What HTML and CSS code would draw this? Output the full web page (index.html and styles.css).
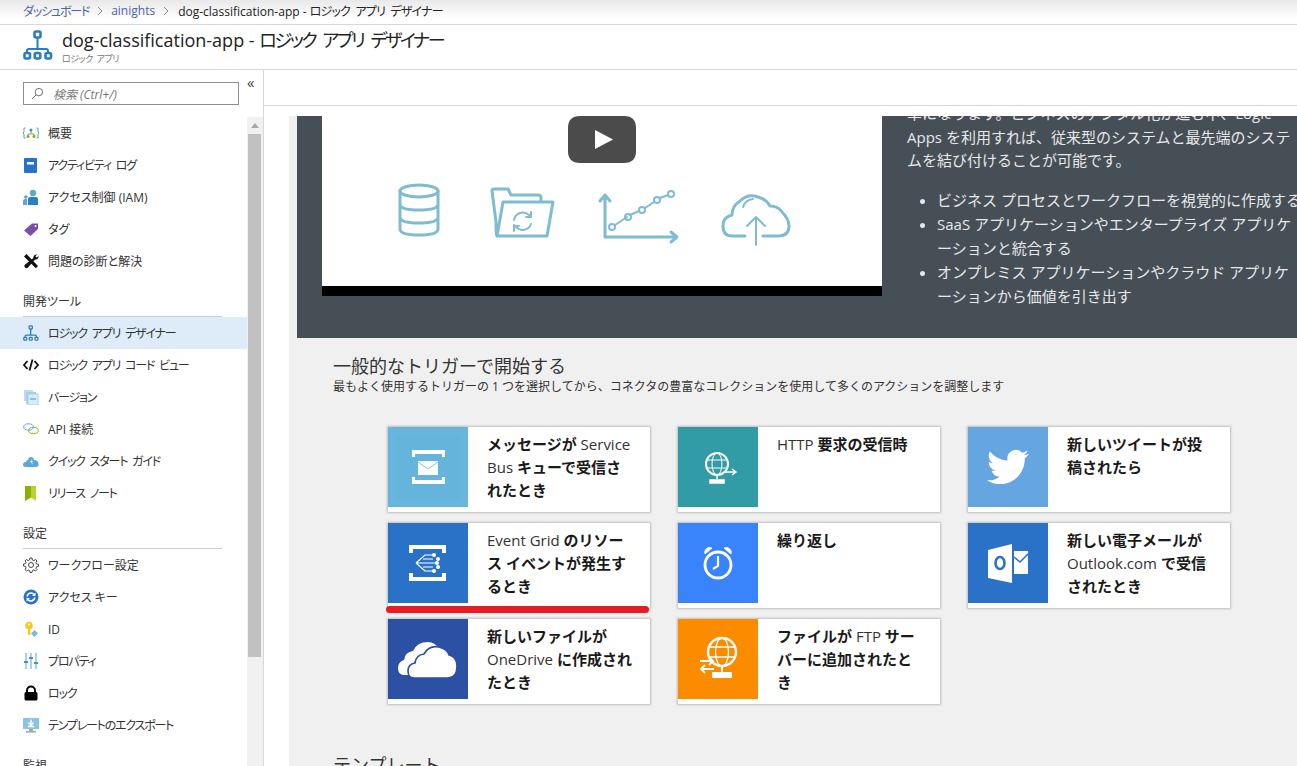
FILE: index.html
```html
<!DOCTYPE html>
<html lang="ja">
<head>
<meta charset="utf-8">
<title>dog-classification-app - ロジック アプリ デザイナー</title>
<link rel="stylesheet" href="styles.css">
</head>
<body>
<div class="page">
  <nav class="crumbs">
    <a class="crumb-link tight">ダッシュボード</a>
    <svg class="chev" viewBox="0 0 6 10"><path d="M1 1l4 4-4 4" fill="none" stroke="#8a8a8a"/></svg>
    <a class="crumb-link">ainights</a>
    <svg class="chev" viewBox="0 0 6 10"><path d="M1 1l4 4-4 4" fill="none" stroke="#8a8a8a"/></svg>
    <span class="crumb-current">dog-classification-app - <span class="tight-half">ロジック アプリ デザイナー</span></span>
  </nav>
  <header class="head">
    <svg class="head-icon" viewBox="0 0 30 30" fill="none" stroke="#2b7cbf" stroke-width="2.6">
      <rect x="11.5" y="1.5" width="6" height="6" rx="1.5"/>
      <path d="M14.500 7.500V19M4 24v-3q0-2 2-2h17q2 0 2 2v3" stroke-width="2"/>
      <rect x="1.500" y="23" width="5.500" height="5.500" rx="1.500"/>
      <rect x="11.800" y="23" width="5.500" height="5.500" rx="1.500"/>
      <rect x="22.500" y="23" width="5.500" height="5.500" rx="1.500"/>
    </svg>
    <div>
      <h1 class="head-title">dog-classification-app - <span class="tight-title">ロジック アプリ デザイナー</span></h1>
      <div class="head-sub">ロジック アプリ</div>
    </div>
  </header>
  <div class="body">
    <aside class="side">
      <div class="side-top">
        <div class="search">
          <svg class="search-icon" viewBox="0 0 14 14" fill="none" stroke="#666"><circle cx="8.500" cy="5.500" r="4"/><path d="M5.500 8.500L1 13"/></svg>
          <span>検索 (Ctrl+/)</span>
        </div>
        <span class="collapse">«</span>
      </div>
      <div class="side-body">
        <ul class="menu">
          <li class="item"><svg class="ico" viewBox="0 0 16 16"><path d="M2.500 3H1v4l-1 1 1 1v4h1.500M13.500 3H15v4l1 1-1 1v4h-1.500" fill="none" stroke="#5ba3d0"/><circle cx="8" cy="5" r="1.500" fill="#3b8fc9"/><path d="M8 6v2.500M5 11V9h6v2" fill="none" stroke="#777" stroke-width=".8"/><circle cx="5" cy="11.500" r="1.500" fill="#7fba00"/><circle cx="11" cy="11.500" r="1.500" fill="#7fba00"/></svg>概要</li>
          <li class="item tight"><svg class="ico" viewBox="0 0 16 16"><rect x="1" y="1" width="13" height="15" rx="1" fill="#2a71c8"/><rect x="4" y="5" width="7" height="2.500" fill="#fff"/></svg>アクティビティ ログ</li>
          <li class="item"><svg class="ico" viewBox="0 0 16 16"><circle cx="10" cy="4" r="3.200" fill="#59a8d8"/><path d="M5 16V10q0-2 2-2h6q2 0 2 2v6z" fill="#2f7ebd"/><circle cx="2.800" cy="8" r="1.800" fill="#59a8d8"/><path d="M0 16v-4q0-2 2-2h2v6z" fill="#59a8d8"/></svg>アクセス制御 (IAM)</li>
          <li class="item"><svg class="ico" viewBox="0 0 16 16"><path d="M9 2.500h6v5.500L7.500 15 1 9.500z" fill="#7a4fa8"/><circle cx="12.500" cy="5" r="1" fill="#fff"/></svg>タグ</li>
          <li class="item"><svg class="ico" viewBox="0 0 16 16" fill="#111"><path d="M1 3.500L3.500 1l11.500 12-2.200 2.200z"/><path d="M10 5.500l1-3 3-1.500-1.500 2.500 1 1 2.500-1.500-1.500 3-3 1L5 14.500q-1.500 1.500-3 0t0-3z"/></svg>問題の診断と解決</li>
          <li class="label">開発ツール</li>
          <li class="item item-on tight"><svg class="ico" viewBox="0 0 30 30" fill="none" stroke="#2b7cbf" stroke-width="2.400"><rect x="11.500" y="1.500" width="6" height="6" rx="1.500"/><path d="M14.500 7.500V19M4 24v-3q0-2 2-2h17q2 0 2 2v3"/><rect x="1.500" y="23" width="5.500" height="5.500" rx="1.500"/><rect x="11.800" y="23" width="5.500" height="5.500" rx="1.500"/><rect x="22.500" y="23" width="5.500" height="5.500" rx="1.500"/></svg>ロジック アプリ デザイナー</li>
          <li class="item tight"><svg class="ico" viewBox="0 0 16 16" fill="none" stroke="#111" stroke-width="1.800"><path d="M4.500 4L1 8l3.500 4M11.500 4L15 8l-3.500 4M9.500 2.500l-3 11"/></svg>ロジック アプリ コード ビュー</li>
          <li class="item tight"><svg class="ico" viewBox="0 0 16 16"><rect x="1" y="1" width="9" height="11" fill="#bcdcf0"/><rect x="3" y="3" width="10" height="12" fill="#a5d0ea"/><rect x="5" y="5" width="10" height="11" fill="#d8ebf7" stroke="#a5d0ea"/><rect x="7" y="9" width="6" height="2" fill="#8cc3e3"/></svg>バージョン</li>
          <li class="item"><svg class="ico" viewBox="0 0 16 16" fill="none"><ellipse cx="5.500" cy="6" rx="4.800" ry="3.200" stroke="#5fb0d8"/><ellipse cx="10.500" cy="9.500" rx="4.800" ry="3.200" stroke="#8ab820"/></svg>API 接続</li>
          <li class="item tight"><svg class="ico" viewBox="0 0 16 16"><path d="M3 14q-3 0-3-2.500T3 9q.5-2 2-2 .5-3 3-3t3 3q4 0 4.500 3.500T13 14z" fill="#59a8d8"/><path d="M8 6l2 3H9l1 3-3-4h1.500z" fill="#fff"/></svg>クイック スタート ガイド</li>
          <li class="item tight"><svg class="ico" viewBox="0 0 16 16"><path d="M2 1h6v11.500L2 16z" fill="#8ab000"/><path d="M8 1h5v15l-5-3.500z" fill="#b8d432"/></svg>リリース ノート</li>
          <li class="label">設定</li>
          <li class="item"><svg class="ico" viewBox="0 0 16 16" fill="none" stroke="#444"><circle cx="8" cy="8" r="2.500"/><path d="M7 1h2l.4 2 1.500.6L12.600 2.500 14 4l-1.100 1.700.6 1.300 2 .4v2l-2 .4-.6 1.500L14 12.500 12.500 14l-1.700-1.100-1.400.6L9 15.500H7l-.4-2-1.400-.6L3.500 14 2 12.600l1.100-1.700-.6-1.500-2-.4V7l2-.4.6-1.300L2 3.900 3.500 2.500l1.700 1.100 1.400-.6z"/></svg>ワークフロー設定</li>
          <li class="item"><svg class="ico" viewBox="0 0 16 16"><circle cx="8" cy="8" r="7.500" fill="#2a71c8"/><path d="M4 7.500Q5 4 8 4q2 0 3 1.500M12 8.500q-1 3.500-4 3.500-2 0-3-1.500" fill="none" stroke="#fff" stroke-width="1.500"/><path d="M12.500 3.500v3.500H9zM3.500 12.500V9H7z" fill="#fff"/></svg>アクセス キー</li>
          <li class="item"><svg class="ico" viewBox="0 0 16 16"><circle cx="6" cy="4.500" r="3.800" fill="#f7c81e"/><circle cx="6" cy="3.500" r="1" fill="#fff"/><rect x="5" y="7" width="2.400" height="7" fill="#f7c81e"/><path d="M11.500 9l3.500 3.500-3.500 3.500L8 12.500z" fill="#7ab8e0"/></svg>ID</li>
          <li class="item tight"><svg class="ico" viewBox="0 0 16 16"><g fill="#a9d3ec"><rect x="2" y="0" width="2" height="16"/><rect x="7" y="0" width="2" height="16"/><rect x="12" y="0" width="2" height="16"/></g><g fill="#4a8fc4"><rect x="1" y="8" width="4" height="2"/><rect x="6" y="4" width="4" height="2"/><rect x="11" y="9" width="4" height="2"/></g></svg>プロパティ</li>
          <li class="item tight"><svg class="ico" viewBox="0 0 16 16"><path d="M4 8V5.500a4 4 0 018 0V8" fill="none" stroke="#000" stroke-width="2"/><rect x="1.500" y="7" width="13" height="8.500" rx="1.500" fill="#000"/></svg>ロック</li>
          <li class="item tight"><svg class="ico" viewBox="0 0 16 16"><rect x="0" y="1" width="16" height="11" fill="#8cc3e3"/><rect x="6" y="12" width="4" height="2" fill="#9aa"/><rect x="3" y="14" width="10" height="1.500" fill="#9aa"/><path d="M8 2.500v5M5.500 5.500L8 8.500l2.500-3M5 9.500h6" fill="none" stroke="#fff" stroke-width="1.400"/></svg>テンプレートのエクスポート</li>
          <li class="label">監視</li>
        </ul>
        <div class="scrollbar">
          <svg class="scroll-up" viewBox="0 0 8 5"><path d="M0 5l4-5 4 5z" fill="#a8a8a8"/></svg>
          <div class="scroll-thumb"></div>
        </div>
      </div>
    </aside>
    <main class="main">
      <div class="toolbar"></div>
      <div class="pane">
        <div class="scroller">
          <section class="hero">
            <div class="video">
              <svg class="video-img" viewBox="322 116 560 170" fill="none" stroke="#7fbcd2" stroke-width="3" stroke-linecap="round" stroke-linejoin="round">
                <ellipse cx="419" cy="191" rx="19" ry="6"/>
                <path d="M400 191v38q0 6 19 6t19-6v-38M400 204q0 6 19 6t19-6M400 217q0 6 19 6t19-6"/>
                <path d="M496 222l-4-31q0-2 2-2h14l3 6h27q3 0 3 3v4M497 236l6-34h50l-6 34zM497 236q-1 0-1-14"/>
                <path d="M514 220a9 9 0 0115-5l2 2M531 212v5h-5M531 224a9 9 0 01-15 3l-2-2M514 231v-5h5" stroke-width="2"/>
                <path d="M605 195v42h71M600 201l5-6 5 6M671 232l6 5-6 5"/>
                <path d="M615 225l12-8M630 215l9-4M645 208l9-6M660 198l8-3" stroke-width="2"/>
                <circle cx="612" cy="227" r="3" stroke-width="2"/><circle cx="628" cy="217" r="3" stroke-width="2"/><circle cx="642" cy="210" r="3" stroke-width="2"/><circle cx="657" cy="200" r="3" stroke-width="2"/><circle cx="671" cy="194" r="3" stroke-width="2"/>
                <path d="M745 236h-13q-9 0-9-10 0-9 9-11 0-9 8-14 8-8 18-4 8 2 12 9 8 0 12 6 7 7 7 14 0 10-11 10h-15"/>
                <path d="M743 207q2-7 10-8" stroke-width="2"/>
                <path d="M756 245v-27M747 226l9-9 9 9" stroke-width="2"/>
                <path d="M580 116h44q12 0 12 12v23q0 12-12 12h-44q-12 0-12-12v-23q0-12 12-12z" fill="#4b4b4b" stroke="none"/>
                <path d="M595 130l18 9.500-18 9.500z" fill="#fff" stroke="none"/>
              </svg>
              <div class="video-bar"></div>
            </div>
            <div class="hero-text">
              <p class="hero-p">率になります。ビジネスのデジタル化が進む中、Logic<br>Apps を利用すれば、従来型のシステムと最先端のシステ<br>ムを結び付けることが可能です。</p>
              <ul class="hero-list">
                <li>ビジネス プロセスとワークフローを視覚的に作成する</li>
                <li>SaaS アプリケーションやエンタープライズ アプリケ<br>ーションと統合する</li>
                <li>オンプレミス アプリケーションやクラウド アプリケ<br>ーションから価値を引き出す</li>
              </ul>
            </div>
          </section>
          <section class="triggers">
            <h2 class="sec-title">一般的なトリガーで開始する</h2>
            <p class="sec-sub">最もよく使用するトリガーの 1 つを選択してから、コネクタの豊富なコレクションを使用して多くのアクションを調整します</p>
            <div class="grid">
              <article class="card">
                <svg class="tile c-sb" viewBox="0 0 80 80"><rect x="8" y="8" width="64" height="64" fill="#65b4db"/><path d="M24 30v-7h33v7h-3v-3H27v3zM24 50v7h33v-7h-3v3H27v-3z" fill="#fff"/><rect x="30" y="34" width="20" height="14" fill="#fff"/><path d="M30 35l10 7 10-7" fill="none" stroke="#8ccbe8"/></svg>
                <p class="card-text"><b>メッセージが</b> Service<br>Bus <b>キューで受信さ</b><br><b>れたとき</b></p>
              </article>
              <article class="card">
                <svg class="tile c-http" viewBox="0 0 80 80" fill="none" stroke="#fff" stroke-width="1.500"><circle cx="39" cy="37" r="11" stroke-width="2"/><ellipse cx="39" cy="37" rx="5" ry="11" stroke-width="1"/><path d="M28 33h22M28 41h22" stroke-width="1"/><path d="M39 48v4"/><path d="M32 53h14v3H32z" fill="#fff"/><path d="M46 45h12M54 42l4 3-4 3"/></svg>
                <p class="card-text">HTTP <b>要求の受信時</b></p>
              </article>
              <article class="card">
                <svg class="tile c-tw" viewBox="0 0 80 80"><path transform="translate(19 19) scale(1.750)" fill="#fff" d="M23.953 4.570a10 10 0 01-2.825.775 4.958 4.958 0 002.163-2.723c-.951.555-2.005.959-3.127 1.184a4.920 4.920 0 00-8.384 4.482C7.690 8.095 4.067 6.130 1.640 3.162a4.822 4.822 0 00-.666 2.475c0 1.710.870 3.213 2.188 4.096a4.904 4.904 0 01-2.228-.616v.060a4.923 4.923 0 003.946 4.827 4.996 4.996 0 01-2.212.085 4.936 4.936 0 004.604 3.417 9.867 9.867 0 01-6.102 2.105c-.390 0-.779-.023-1.170-.067a13.995 13.995 0 007.557 2.209c9.053 0 13.998-7.496 13.998-13.985 0-.210 0-.420-.015-.630A9.935 9.935 0 0024 4.590z"/></svg>
                <p class="card-text"><b>新しいツイートが投</b><br><b>稿されたら</b></p>
              </article>
              <article class="card">
                <svg class="tile c-blue" viewBox="0 0 80 80"><path d="M21 30v-8h37v8h-4v-4H25v4zM21 50v8h37v-8h-4v4H25v-4z" fill="#fff"/><path d="M28 40l9-8h8M28 40h20M28 40l9 8h8M35 36h10M35 44h10" fill="none" stroke="#fff" stroke-width="1.200"/><circle cx="46" cy="32" r="2" fill="#fff"/><circle cx="50" cy="36" r="2" fill="#fff"/><circle cx="49" cy="40" r="2" fill="#fff"/><circle cx="50" cy="44" r="2" fill="#fff"/><circle cx="46" cy="48" r="2" fill="#fff"/></svg>
                <p class="card-text">Event Grid <b>のリソー</b><br><b>ス イベントが発生す</b><br><b>るとき</b></p>
              </article>
              <article class="card">
                <svg class="tile c-alarm" viewBox="0 0 80 80" fill="none" stroke="#fff" stroke-width="2.800"><circle cx="40" cy="42" r="13"/><path d="M40 33v10l-5 3" stroke-width="2.200"/><path d="M27 31a5 5 0 017-6zM53 31a5 5 0 00-7-6z" fill="#fff" stroke-width="1"/></svg>
                <p class="card-text"><b>繰り返し</b></p>
              </article>
              <article class="card">
                <svg class="tile c-blue" viewBox="0 0 80 80"><path d="M20 27l24-6v39l-24-5z" fill="#fff"/><ellipse cx="32" cy="40" rx="4.500" ry="6" fill="none" stroke="#2a71c8" stroke-width="2.600"/><rect x="46" y="28" width="14" height="23" fill="#fff"/><path d="M46 34l6 5 8-8" fill="none" stroke="#2a71c8" stroke-width="1.600"/></svg>
                <p class="card-text"><b>新しい電子メールが</b><br>Outlook.com <b>で受信</b><br><b>されたとき</b></p>
              </article>
              <article class="card">
                <svg class="tile c-od" viewBox="0 0 80 80"><path d="M16 56q-6 0-6-7 0-6 6-8 1-8 9-9 4-9 15-9 7 0 11 7-12-1-17 8-8 1-9 9-5 2-4 9z" fill="#fff"/><path d="M26 59q-6 0-6-7t7-8q1-8 9-9 5-9 15-7 8 2 10 8 8 2 8 11 0 12-9 12z" fill="#fff" stroke="#2b50a4" stroke-width="1.600"/></svg>
                <p class="card-text"><b>新しいファイルが</b><br>OneDrive <b>に作成され</b><br><b>たとき</b></p>
              </article>
              <article class="card">
                <svg class="tile c-ftp" viewBox="0 0 80 80" fill="none" stroke="#fff" stroke-width="1.800"><circle cx="44" cy="33" r="14" stroke-width="2.400"/><ellipse cx="44" cy="33" rx="6.500" ry="14" stroke-width="1.300"/><path d="M30 28h28M30 38h28" stroke-width="1.300"/><path d="M44 47v6"/><path d="M35 54h18v4H35z" fill="#fff"/><path d="M22 42h13M31 38l4 4-4 4" stroke="#fff"/><path d="M36 50H23M27 46l-4 4 4 4" stroke="#fff"/></svg>
                <p class="card-text"><b>ファイルが</b> FTP <b>サー</b><br><b>バーに追加されたと</b><br><b>き</b></p>
              </article>
              <div class="underline"></div>
            </div>
            <h2 class="sec-title sec-next">テンプレート</h2>
          </section>
        </div>
      </div>
    </main>
  </div>
</div>
</body>
</html>
```
FILE: styles.css
```css
* { box-sizing: border-box; }
html, body { margin: 0; height: 100%; overflow: hidden; }
body { font-family: "Open Sans", "Noto Sans CJK JP", sans-serif; color: #222; background: #fff; }
.page { height: 766px; display: flex; flex-direction: column; overflow: hidden; }
.tight { letter-spacing: -1.2px; word-spacing: 3px; }
.tight-half { letter-spacing: -.8px; word-spacing: 3px; }
.tight-title { letter-spacing: -2.4px; word-spacing: 5px; }

.crumbs { height: 25px; flex: none; display: flex; align-items: center; gap: 8px; padding: 0 0 3px 23px; font-size: 12px; font-feature-settings: "palt"; background: linear-gradient(#e9e9e9, #fff 80%); border-bottom: 1px solid #d8d8d8; }
.crumb-link { color: #4a63ab; }
.crumb-current { color: #222; margin-left: 1px; }
.chev { width: 6px; height: 10px; }

.head { height: 45px; flex: none; display: flex; align-items: flex-start; gap: 9px; padding: 5px 0 0 23px; border-bottom: 1px solid #d8d8d8; font-feature-settings: "palt"; }
.head-icon { width: 30px; height: 30px; flex: none; }
.head-title { margin: 0; font-size: 18px; line-height: 21px; font-weight: 400; color: #222; }
.head-sub { font-size: 9px; line-height: 12px; color: #777; margin-top: 2px; letter-spacing: -.5px; word-spacing: 2px; }

.body { flex: 1; display: flex; min-height: 0; }
.side { width: 264px; flex: none; display: flex; flex-direction: column; border-right: 1px solid #d8d8d8; font-feature-settings: "palt"; }
.side-top { height: 47px; flex: none; display: flex; align-items: flex-start; padding: 12px 0 0 23px; position: relative; }
.search { width: 216px; height: 23px; border: 1px solid #8f8f8f; display: flex; align-items: center; gap: 9px; padding-left: 7px; font-size: 12px; font-style: italic; color: #777; }
.search-icon { width: 13px; height: 13px; flex: none; }
.collapse { font-size: 15px; line-height: 12px; color: #444; margin: -6px 0 0 8px; }
.side-body { flex: 1; display: flex; min-height: 0; }
.menu { list-style: none; margin: 0; padding: 0; width: 247px; flex: none; }
.item { height: 32px; display: flex; align-items: center; gap: 9px; padding-left: 23px; font-size: 12px; color: #333; }
.item-on { background: #deecf9; }
.ico { width: 16px; height: 16px; flex: none; }
.label { height: 40px; margin: 0 25px 0 23px; padding-top: 16px; font-size: 12px; line-height: 18px; color: #333; border-bottom: 1px solid #cfcfcf; }
.scrollbar { flex: 1; background: #f1f1f1; padding: 6px 2px 0 1px; }
.scroll-up { display: block; width: 8px; height: 5px; margin: 0 auto 6px; }
.scroll-thumb { height: 523px; background: #c1c1c1; }

.main { flex: 1; min-width: 0; display: flex; flex-direction: column; }
.toolbar { height: 36px; flex: none; border-bottom: 1px solid #d8d8d8; }
.pane { flex: 1; min-height: 0; padding: 10px 0 0 25px; display: flex; }
.scroller { flex: 1; min-width: 0; overflow: hidden; background: #f0f0f0; padding-left: 8px; }

.hero { display: flex; height: 222px; background: #474f56; padding-left: 25px; overflow: hidden; }
.video { width: 560px; flex: none; }
.video-img { display: block; width: 560px; height: 170px; background: #fff; }
.video-bar { height: 10px; background: #000; }
.hero-text { margin: -14px 0 0 25px; flex: none; white-space: nowrap; font-size: 15px; line-height: 23.5px; color: #e6e8ea; }
.hero-p { margin: 0; }
.hero-list { margin: 15px 0 0; padding: 0 0 0 30px; line-height: 24px; }

.triggers { padding-left: 36px; }
.sec-title { margin: 16px 0 0; font-size: 18px; line-height: 24px; font-weight: 400; color: #333; }
.sec-sub { margin: 1px 0 0; font-size: 12px; line-height: 16px; color: #333; }
.grid { position: relative; display: grid; grid-template-columns: repeat(3, 262px); grid-auto-rows: 85px; gap: 11px 28px; margin: 32px 0 0 55px; }
.card { display: flex; background: #fff; box-shadow: 0 0 2px 1px #bdbdbd; }
.tile { width: 80px; height: 80px; flex: none; }
.c-sb { background: #67b6dd; }
.c-http { background: #319ba6; }
.c-tw { background: #65a6e0; }
.c-blue { background: #2a71c8; }
.c-alarm { background: #3a84fb; }
.c-od { background: #2b50a4; }
.c-ftp { background: #fb8c00; }
.card-text { margin: 6px 0 0 19px; font-size: 15px; line-height: 23px; color: #333; white-space: nowrap; }
.card-text b { font-weight: 700; color: #1a1a1a; }
.underline { position: absolute; left: -2px; top: 179px; width: 263px; height: 7px; border-radius: 4px; background: #e81c24; }
.sec-next { margin-top: 49px; }
```
